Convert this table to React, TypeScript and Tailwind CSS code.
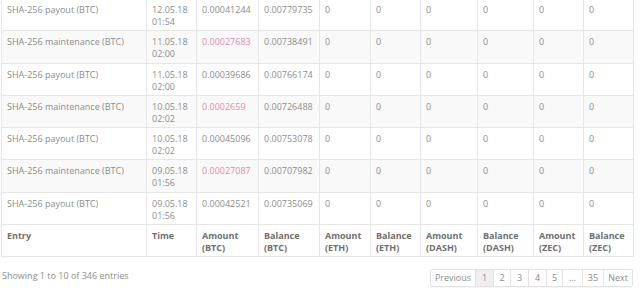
import React from "react";

type Row = {
  entry: string;
  date: string;
  time: string;
  amount: string;
  balance: string;
  negative?: boolean;
};

const rows: Row[] = [
  { entry: "SHA-256 payout (BTC)", date: "12.05.18", time: "01:54", amount: "0.00041244", balance: "0.00779735" },
  { entry: "SHA-256 maintenance (BTC)", date: "11.05.18", time: "02:00", amount: "0.00027683", balance: "0.00738491", negative: true },
  { entry: "SHA-256 payout (BTC)", date: "11.05.18", time: "02:00", amount: "0.00039686", balance: "0.00766174" },
  { entry: "SHA-256 maintenance (BTC)", date: "10.05.18", time: "02:02", amount: "0.0002659", balance: "0.00726488", negative: true },
  { entry: "SHA-256 payout (BTC)", date: "10.05.18", time: "02:02", amount: "0.00045096", balance: "0.00753078" },
  { entry: "SHA-256 maintenance (BTC)", date: "09.05.18", time: "01:56", amount: "0.00027087", balance: "0.00707982", negative: true },
  { entry: "SHA-256 payout (BTC)", date: "09.05.18", time: "01:56", amount: "0.00042521", balance: "0.00735069" },
];

const widths = ["w-[145px]", "w-[50px]", "w-[62px]", "w-[61px]", "w-[51px]", "w-[50px]", "w-[57px]", "w-[56px]", "w-[50px]", "w-[50px]"];

const footer: [string, string?][] = [
  ["Entry"],
  ["Time"],
  ["Amount", "(BTC)"],
  ["Balance", "(BTC)"],
  ["Amount", "(ETH)"],
  ["Balance", "(ETH)"],
  ["Amount", "(DASH)"],
  ["Balance", "(DASH)"],
  ["Amount", "(ZEC)"],
  ["Balance", "(ZEC)"],
];

const cell = "border border-[#e6e6e6] px-[5px] pt-[5px] pb-[2px] align-top text-left";

// page buttons with their measured widths
const pages: [string, string][] = [
  ["Previous", "w-[44px]"],
  ["1", "w-[18px]"],
  ["2", "w-[17px]"],
  ["3", "w-[18px]"],
  ["4", "w-[18px]"],
  ["5", "w-[16px]"],
  ["…", "w-[20px]"],
  ["35", "w-[21px]"],
  ["Next", "w-[29px]"],
];

export default function App() {
  return (
    <div
      className="w-[640px] h-[305px] overflow-hidden bg-white text-[9px] leading-[12px] text-[#8c8c8c]"
      style={{ fontFamily: '"Open Sans", sans-serif' }}
    >
      <table className="ml-[1px] mt-[-2px] w-[632px] table-fixed border-collapse">
        <colgroup>
          {widths.map((w, i) => (
            <col key={i} className={w} />
          ))}
        </colgroup>
        <tbody>
          {rows.map((r, i) => (
            <tr key={i} className={`h-[32.3px] ${i % 2 === 1 ? "bg-[#f9f9f9]" : "bg-white"}`}>
              <td className={cell}>{r.entry}</td>
              <td className={cell}>
                {r.date}
                <br />
                {r.time}
              </td>
              <td className={`${cell} ${r.negative ? "text-[#e08aab]" : ""}`}>{r.amount}</td>
              <td className={cell}>{r.balance}</td>
              {Array.from({ length: 6 }).map((_, j) => (
                <td key={j} className={cell}>
                  0
                </td>
              ))}
            </tr>
          ))}
        </tbody>
        <tfoot>
          <tr className="h-[32.3px] bg-white">
            {footer.map(([a, b], i) => (
              <th key={i} className={`${cell} font-bold text-[#6f6f6f]`}>
                {a}
                {b && (
                  <>
                    <br />
                    {b}
                  </>
                )}
              </th>
            ))}
          </tr>
        </tfoot>
      </table>

      <div className="flex items-start justify-between pl-[2px] pr-[7px] pt-[12px]">
        <div className="pt-[1px]">Showing 1 to 10 of 346 entries</div>
        <ul className="flex h-[18px] rounded-[2px] border border-[#e2e2e2] shadow-[0_1px_1px_rgba(0,0,0,0.04)]">
          {pages.map(([p, w], i) => (
            <li
              key={p}
              className={`flex items-center justify-center ${w} ${i > 0 ? "border-l border-[#e2e2e2]" : ""} ${
                p === "1" ? "bg-[#efefef]" : ""
              }`}
            >
              {p}
            </li>
          ))}
        </ul>
      </div>
    </div>
  );
}
